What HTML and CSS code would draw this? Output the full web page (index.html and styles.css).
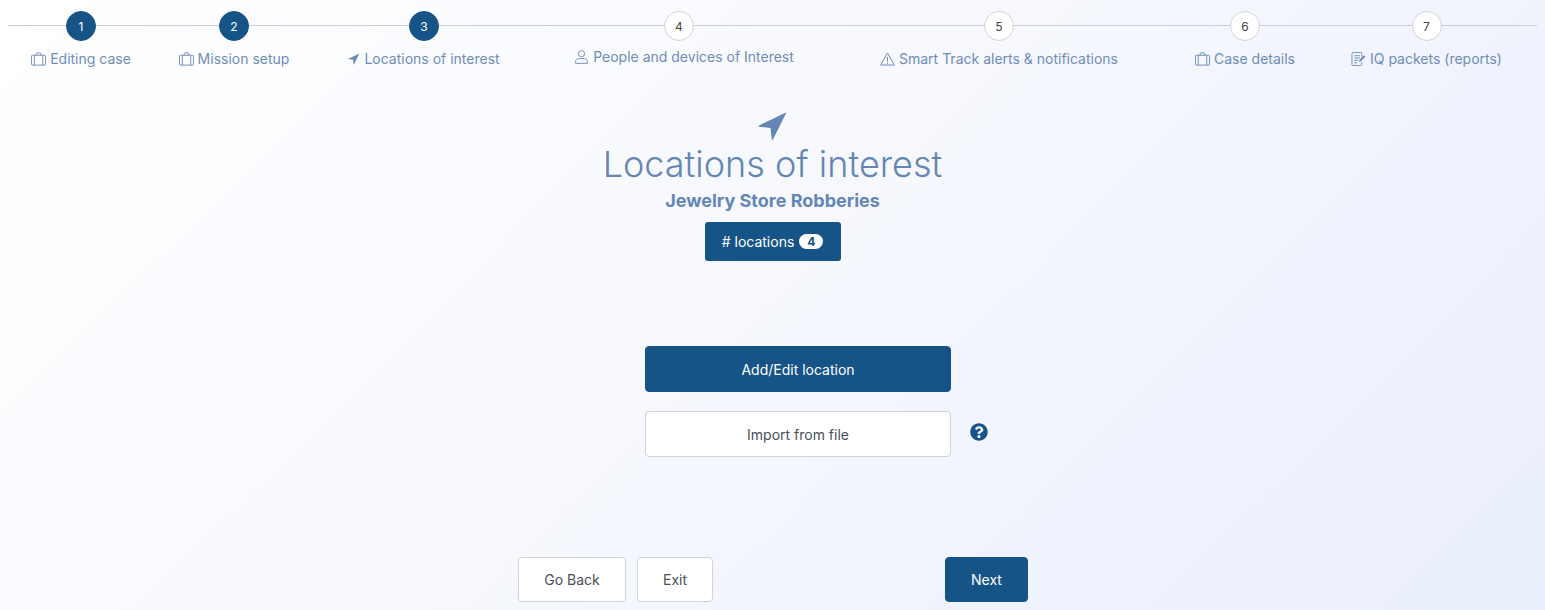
FILE: index.html
```html
<!DOCTYPE html>
<html lang="en">
<head>
  <meta charset="UTF-8" />
  <title>Locations of interest</title>
  <link rel="stylesheet" href="styles.css">
</head>
<body>
  <svg class="sprites" aria-hidden="true">
    <symbol id="case" viewBox="0 0 16 14">
      <path d="M1.5 3h13a1 1 0 0 1 1 1v8.500a1 1 0 0 1-1 1h-13a1 1 0 0 1-1-1V4a1 1 0 0 1 1-1zM3.500 3v10.500M12.500 3v10.500M5.500 3V1.500a1 1 0 0 1 1-1h3a1 1 0 0 1 1 1V3" fill="none" stroke="currentColor" />
    </symbol>
    <symbol id="arrow" viewBox="0 0 30 30">
      <path d="M1 14.500 28.500 1.300 15 28.500a.7.7 0 0 1-1.300-.2L12.500 17 1.300 15.800a.7.7 0 0 1-.3-1.300z" fill="currentColor" />
    </symbol>
  </svg>

  <nav class="stepper">
    <div class="step done">
      <span class="num">1</span>
      <span class="label"><svg class="ico"><use href="#case" /></svg>Editing case</span>
    </div>
    <div class="step done">
      <span class="num">2</span>
      <span class="label"><svg class="ico"><use href="#case" /></svg>Mission setup</span>
    </div>
    <div class="step done">
      <span class="num">3</span>
      <span class="label"><svg class="ico ico-arrow"><use href="#arrow" /></svg>Locations of interest</span>
    </div>
    <div class="step step-people">
      <span class="num">4</span>
      <span class="label">
        <svg class="ico" viewBox="0 0 14 15"><circle cx="7" cy="4" r="3.300" fill="none" stroke="currentColor" /><path d="M.7 14.300v-1.800c0-2 1.500-3.300 3.300-3.300h6c1.800 0 3.300 1.300 3.300 3.300v1.800z" fill="none" stroke="currentColor" /></svg>People and devices of Interest
      </span>
    </div>
    <div class="step">
      <span class="num">5</span>
      <span class="label">
        <svg class="ico" viewBox="0 0 15 14"><path d="M7.500 1 14.300 13H.7zM7.500 5v4.500M7.500 10.500v1.300" fill="none" stroke="currentColor" stroke-linejoin="round" /></svg>Smart Track alerts &amp; notifications
      </span>
    </div>
    <div class="step">
      <span class="num">6</span>
      <span class="label"><svg class="ico"><use href="#case" /></svg>Case details</span>
    </div>
    <div class="step">
      <span class="num">7</span>
      <span class="label">
        <svg class="ico" viewBox="0 0 15 15"><path d="M11 5V1.500a1 1 0 0 0-1-1H1.500a1 1 0 0 0-1 1v12a1 1 0 0 0 1 1H10a1 1 0 0 0 1-1V11M3 4h6M3 6.500h6M3 9h4M3 11.500h3" fill="none" stroke="currentColor" /><path d="M8 10.800 8.500 8.500 13 3.500l1.700 1.500-4.500 5z" fill="currentColor" /></svg>IQ packets (reports)
      </span>
    </div>
  </nav>

  <header class="hero">
    <svg class="hero-icon"><use href="#arrow" /></svg>
    <h1>Locations of interest</h1>
    <h2>Jewelry Store Robberies</h2>
    <div class="count"># locations <span class="pill">4</span></div>
  </header>

  <section class="actions">
    <button class="btn btn-primary btn-wide">Add/Edit location</button>
    <div class="import-row">
      <button class="btn btn-wide">Import from file</button>
      <svg class="help" viewBox="0 0 512 512"><path fill="currentColor" d="M504 256c0 136.997-111.043 248-248 248S8 392.997 8 256C8 119.083 119.043 8 256 8s248 111.083 248 248zM262.655 90c-54.497 0-89.255 22.957-116.549 63.758-3.536 5.286-2.353 12.415 2.715 16.258l34.699 26.310c5.205 3.947 12.621 3.008 16.665-2.122 17.864-22.658 30.113-35.797 57.303-35.797 20.429 0 45.698 13.148 45.698 32.958 0 14.976-12.363 22.667-32.534 33.976C247.128 238.528 216 254.941 216 296v4c0 6.627 5.373 12 12 12h56c6.627 0 12-5.373 12-12v-1.333c0-28.462 83.186-29.647 83.186-106.667 0-58.002-60.165-102-116.531-102zM256 338c-25.365 0-46 20.635-46 46 0 25.364 20.635 46 46 46s46-20.636 46-46c0-25.365-20.635-46-46-46z" /></svg>
    </div>
  </section>

  <footer class="footer">
    <button class="btn btn-back">Go Back</button>
    <button class="btn btn-exit">Exit</button>
    <button class="btn btn-primary btn-next">Next</button>
  </footer>
</body>
</html>
```

FILE: styles.css
```css
* {
  box-sizing: border-box;
}

html, body {
  height: 100%;
}

body {
  margin: 0;
  padding: 11px 8px 0;
  overflow: hidden;
  font-family: "Inter", "Open Sans", sans-serif;
  background: linear-gradient(135deg, #ffffff 0%, #f6f8fe 50%, #e9eefc 100%);
  color: #6f8cb8;
}

.sprites {
  display: none;
}

.stepper {
  position: relative;
  display: grid;
  grid-template-columns: 146px 160px 220px 290px 350px 142px 221px;
}

.stepper::before {
  content: "";
  position: absolute;
  left: 0;
  right: 0;
  top: 14px;
  height: 1px;
  background: #c9cdd6;
}

.step {
  position: relative;
  display: flex;
  flex-direction: column;
  align-items: center;
}

.num {
  display: flex;
  align-items: center;
  justify-content: center;
  width: 30px;
  height: 30px;
  border-radius: 50%;
  border: 1px solid #d3d3d3;
  background: #fff;
  color: #444;
  font-size: 12px;
}

.step.done .num {
  background: #165488;
  border-color: #165488;
  color: #fff;
}

.label {
  display: flex;
  align-items: center;
  margin-top: 9px;
  font-size: 14px;
  line-height: 18px;
  white-space: nowrap;
}

.step-people {
  padding-left: 10px;
}

.step-people .num {
  margin-left: -10px;
}

.step-people .label {
  margin-top: 7px;
}

.ico {
  width: 15px;
  height: 14px;
  margin-right: 4px;
  flex: none;
}

.ico-arrow {
  width: 12px;
  height: 12px;
}

.hero {
  display: flex;
  flex-direction: column;
  align-items: center;
  margin-top: 43px;
  color: #6486b2;
}

.hero-icon {
  width: 30px;
  height: 30px;
}

h1 {
  margin: 0;
  font-size: 36px;
  line-height: 46px;
  font-weight: 300;
}

h2 {
  margin: 2px 0 0;
  font-size: 18px;
  line-height: 24px;
  font-weight: 700;
}

.count {
  display: flex;
  align-items: center;
  justify-content: center;
  gap: 5px;
  width: 136px;
  height: 39px;
  margin-top: 9px;
  border-radius: 3px;
  background: #165488;
  color: #fff;
  font-size: 14px;
}

.pill {
  width: 24px;
  height: 15px;
  border-radius: 8px;
  background: #fff;
  color: #165488;
  font-size: 12px;
  font-weight: 700;
  line-height: 15px;
  text-align: center;
}

.actions {
  display: flex;
  flex-direction: column;
  gap: 19px;
  margin: 85px 0 0 637px;
}

.import-row {
  display: flex;
  align-items: center;
  gap: 19px;
}

.btn {
  height: 45px;
  border: 1px solid #cfd2d8;
  border-radius: 4px;
  background: #fff;
  color: #4a4f57;
  font-family: inherit;
  font-size: 14px;
}

.btn-primary {
  border-color: #165488;
  background: #165488;
  color: #fff;
}

.btn-wide {
  width: 306px;
  height: 46px;
}

.help {
  width: 18px;
  height: 18px;
  margin-top: -5px;
  color: #165488;
}

.footer {
  display: flex;
  gap: 11px;
  margin: 100px 0 0 510px;
}

.btn-back {
  width: 108px;
}

.btn-exit {
  width: 76px;
}

.btn-next {
  width: 83px;
  margin-left: 221px;
}
```
